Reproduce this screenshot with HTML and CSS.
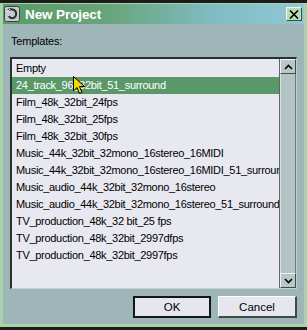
FILE: index.html
```html
<!DOCTYPE html>
<html lang="en">
<head>
<meta charset="utf-8">
<meta name="viewport" content="width=device-width, initial-scale=1.0">
<link rel="stylesheet" href="styles.css">
</head>
<body>

  <div class="window">
    <div class="titlebar">
      <svg class="app-icon" width="16" height="16" viewBox="0 0 16 16">
        <rect x="0.5" y="0.5" width="15" height="15" rx="2" fill="#c4cccc" stroke="#3a4242"/>
        <path d="M4 4 C8 2, 13 4, 12 9 C11 13, 6 13, 5 10" fill="none" stroke="#2a3030" stroke-width="2"/>
        <path d="M3 6 L6 3" stroke="#f0f4f4" stroke-width="1"/>
      </svg>
      <span class="title">New Project</span>
      <div class="close">
        <svg width="10" height="9" viewBox="0 0 10 9">
          <path d="M1 0.5 L9 8.5 M9 0.5 L1 8.5" stroke="#000" stroke-width="1.6"/>
        </svg>
      </div>
    </div>

    <div class="content">
      <div class="label">Templates:</div>

      <div class="listbox">
        <ul class="items">
          <li>Empty</li>
          <li class="selected">24_track_96_32bit_51_surround</li>
          <li>Film_48k_32bit_24fps</li>
          <li>Film_48k_32bit_25fps</li>
          <li>Film_48k_32bit_30fps</li>
          <li>Music_44k_32bit_32mono_16stereo_16MIDI</li>
          <li>Music_44k_32bit_32mono_16stereo_16MIDI_51_surround</li>
          <li>Music_audio_44k_32bit_32mono_16stereo</li>
          <li>Music_audio_44k_32bit_32mono_16stereo_51_surround</li>
          <li>TV_production_48k_32 bit_25 fps</li>
          <li>TV_production_48k_32bit_2997dfps</li>
          <li>TV_production_48k_32bit_2997fps</li>
        </ul>

        <div class="scrollbar">
          <div class="sb-btn">
            <svg width="9" height="6" viewBox="0 0 9 6"><path d="M1 5 L4.5 1.5 L8 5" fill="none" stroke="#000" stroke-width="1.6"/></svg>
          </div>
          <div class="sb-track"></div>
          <div class="sb-btn">
            <svg width="9" height="6" viewBox="0 0 9 6"><path d="M1 1 L4.5 4.5 L8 1" fill="none" stroke="#000" stroke-width="1.6"/></svg>
          </div>
        </div>

        <svg class="cursor" width="13" height="19" viewBox="0 0 13 19">
          <path d="M0.5 0.5 L0.5 15 L4 11.5 L6.5 17.5 L9 16.5 L6.5 10.5 L11.5 10.5 Z" fill="#f4d800" stroke="#000" stroke-width="1"/>
        </svg>
      </div>

      <div class="actions">
        <button class="btn default">OK</button>
        <button class="btn">Cancel</button>
      </div>
    </div>
  </div>

</body>
</html>
```

FILE: styles.css
```css
html, body {
  margin: 0;
  height: 330px;
  overflow: hidden;
}

body {
  background-color: #1c1c1c;
  font-family: "Liberation Sans", Arial, sans-serif;
  font-size: 11px;
}

.window {
  margin-top: 3px;
  width: 301px;
  border: 3px solid #a8d2a8;
  border-top-width: 1px;
  background-color: #9fb6b8;
}

.titlebar {
  height: 20px;
  display: flex;
  align-items: center;
  padding: 0 2px 0 1px;
  background: linear-gradient(to right, #5a9a68 0%, #68a47a 35%, #80bcc4 70%, #90c8d4 100%);
}

.app-icon {
  display: block;
  margin-right: 5px;
}

.title {
  flex: 1;
  color: #fff;
  font-weight: bold;
  font-size: 13.5px;
  letter-spacing: -0.1px;
}

.close {
  width: 14px;
  height: 12px;
  display: flex;
  align-items: center;
  justify-content: center;
  background-color: #b8dcb8;
  border-top: 1px solid #eef8ee;
  border-left: 1px solid #eef8ee;
  border-right: 1px solid #3c5040;
  border-bottom: 1px solid #3c5040;
}

.content {
  height: 300px;
  box-sizing: border-box;
  padding: 11px 7px 6px 7px;
  display: flex;
  flex-direction: column;
}

.label {
  height: 13px;
  line-height: 13px;
  padding-left: 1px;
  color: #000;
  letter-spacing: -0.2px;
}

.listbox {
  position: relative;
  margin-top: 9px;
  height: 232px;
  box-sizing: border-box;
  display: flex;
  background-color: #e8e8f0;
  border-top: 2px solid #283030;
  border-left: 2px solid #283030;
  border-right: 1px solid #c4d0d0;
  border-bottom: 1px solid #c4d0d0;
}

.items {
  list-style: none;
  margin: 0;
  padding: 1px 0 0 0;
  flex: 1;
  min-width: 0;
  overflow: hidden;
}

.items li {
  height: 17px;
  line-height: 17px;
  padding-left: 4px;
  white-space: nowrap;
  overflow: hidden;
  color: #000;
  letter-spacing: -0.3px;
}

.items li.selected {
  background-color: #5a986a;
  color: #fff;
}

.scrollbar {
  width: 16px;
  display: flex;
  flex-direction: column;
  border-left: 1px solid #5c6868;
}

.sb-btn {
  height: 13px;
  display: flex;
  align-items: center;
  justify-content: center;
  background-color: #b8c8c8;
  border-top: 1px solid #eef4f4;
  border-left: 1px solid #eef4f4;
  border-right: 1px solid #404c4c;
  border-bottom: 1px solid #404c4c;
}

.sb-track {
  flex: 1;
  background-color: #b4c4c4;
  border-left: 1px solid #d8e2e2;
  border-right: 1px solid #6c7a7a;
}

.cursor {
  position: absolute;
  left: 61px;
  top: 17px;
}

.actions {
  margin-top: 7px;
  display: flex;
  justify-content: flex-end;
  gap: 7px;
}

.btn {
  width: 79px;
  height: 22px;
  padding: 0;
  font-family: "Liberation Sans", Arial, sans-serif;
  font-size: 11.5px;
  color: #000;
  background-color: #e6e6ee;
  border-top: 1px solid #ffffff;
  border-left: 1px solid #ffffff;
  border-right: 2px solid #404848;
  border-bottom: 2px solid #404848;
}

.btn.default {
  width: 78px;
  border: 2px solid #101818;
}
```
